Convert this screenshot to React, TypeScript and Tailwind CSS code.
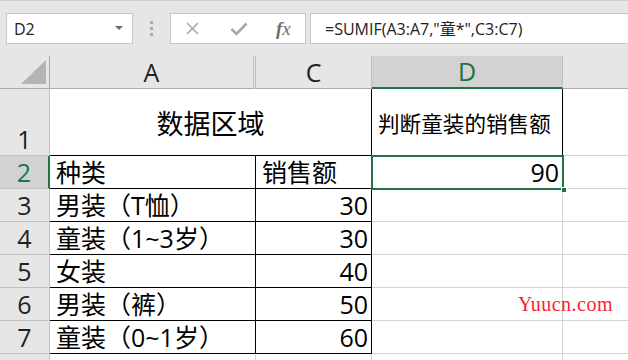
import React from "react";

function RowHead({ n, sel, tall }: { n: number; sel?: boolean; tall?: boolean }) {
  return (
    <div
      className={
        "w-[50px] shrink-0 flex justify-center border-b border-r border-[#bfbfbf] text-[25px] leading-none " +
        (tall ? "items-end pb-[3px] " : "items-center ") +
        (sel ? "bg-[#d2d2d2] text-[#217346] border-r-2 border-r-[#217346]" : "bg-[#e6e6e6] text-[#222]")
      }
    >
      {n}
    </div>
  );
}

function DataRow({ n, a, c }: { n: number; a: string; c: string }) {
  return (
    <div className="flex h-[33px]">
      <RowHead n={n} />
      <div className="w-[206px] shrink-0 border-r border-b border-black flex items-center pl-[6px] text-[25px] leading-none text-black whitespace-nowrap">
        {a}
      </div>
      <div className="w-[116px] shrink-0 border-r border-b border-black flex items-center justify-end pr-[3px] text-[25px] leading-none text-black">
        {c}
      </div>
      <div className="w-[191px] shrink-0 border-r border-b border-[#d4d4d4]" />
      <div className="flex-1 border-b border-[#d4d4d4]" />
    </div>
  );
}

export default function App() {
  return (
    <div
      className="w-[628px] h-[360px] bg-white overflow-hidden relative"
      style={{ fontFamily: '"Open Sans", "Noto Sans CJK SC", sans-serif' }}
    >
      {/* toolbar */}
      <div className="h-[57px] bg-[#e6e6e6] border-t border-[#d0d0d0] flex items-start pt-[12px]">
        <div className="ml-[6px] w-[127px] h-[31px] bg-white border border-[#c6c6c6] flex items-center pl-[7px] pr-[9px] text-[16px] text-[#222]">
          <span className="flex-1">D2</span>
          <svg width="8" height="5" viewBox="0 0 8 5">
            <path d="M0 0 L8 0 L4 4 Z" fill="#6b6b6b" />
          </svg>
        </div>
        <div className="w-[37px] h-[31px] flex flex-col items-center justify-center gap-[3px]">
          <div className="w-[3px] h-[3px] bg-[#acacac]" />
          <div className="w-[3px] h-[3px] bg-[#acacac]" />
          <div className="w-[3px] h-[3px] bg-[#acacac]" />
        </div>
        <div className="w-[136px] h-[31px] bg-white border border-[#c6c6c6] flex items-center pl-[14px]">
          <svg width="15" height="15" viewBox="0 0 15 15">
            <path d="M2 2 L13 13 M13 2 L2 13" stroke="#a8a8a8" strokeWidth="1.6" />
          </svg>
          <svg className="ml-[30px]" width="18" height="14" viewBox="0 0 18 14">
            <path d="M1.5 7 L6.5 12 L16.5 1.5" stroke="#a8a8a8" strokeWidth="2.6" fill="none" />
          </svg>
          <span
            className="ml-[28px] text-[19px] italic text-[#6e6e6e] leading-none"
            style={{ fontFamily: '"Liberation Serif", serif' }}
          >
            <span className="font-bold">f</span>x
          </span>
        </div>
        <div className="ml-[4px] flex-1 h-[31px] bg-white border border-r-0 border-[#c6c6c6] flex items-center pl-[14px] text-[16px] text-[#222] whitespace-nowrap">
          =SUMIF(A3:A7,"童*",C3:C7)
        </div>
      </div>

      {/* column header */}
      <div className="flex h-[33px] -mt-[1px]">
        <div className="w-[50px] shrink-0 bg-[#e6e6e6] border-r border-b border-[#ababab] relative">
          <svg className="absolute right-[3px] bottom-[4px]" width="25" height="24" viewBox="0 0 25 24">
            <path d="M25 0 L25 24 L0 24 Z" fill="#b4b4b4" />
          </svg>
        </div>
        <div className="w-[206px] shrink-0 bg-[#e6e6e6] border-r-[3px] border-double border-b border-b-solid border-[#bfbfbf] border-b-[#ababab] flex items-center justify-center text-[25px] text-[#222] leading-none">
          A
        </div>
        <div className="w-[116px] shrink-0 bg-[#e6e6e6] border-r border-b border-[#bfbfbf] border-b-[#ababab] flex items-center justify-center text-[25px] text-[#222] leading-none">
          C
        </div>
        <div className="w-[191px] shrink-0 bg-[#d2d2d2] border-r border-[#bfbfbf] border-b-2 border-b-[#217346] flex items-center justify-center text-[25px] text-[#217346] leading-none">
          D
        </div>
        <div className="flex-1 bg-[#e6e6e6] border-b border-[#ababab]" />
      </div>

      {/* row 1 */}
      <div className="flex h-[67px]">
        <RowHead n={1} tall />
        <div className="w-[322px] shrink-0 border-r border-b border-black flex items-center justify-center text-[27px] leading-none text-black pt-[3px]">
          数据区域
        </div>
        <div className="w-[191px] shrink-0 border-r border-b border-black flex items-center pl-[6px] text-[21.6px] leading-none text-black whitespace-nowrap pt-[3px]">
          判断童装的销售额
        </div>
        <div className="flex-1 border-b border-[#d4d4d4]" />
      </div>

      {/* row 2 */}
      <div className="flex h-[33px]">
        <RowHead n={2} sel />
        <div className="w-[206px] shrink-0 border-r border-b border-black flex items-center pl-[6px] text-[25px] leading-none text-black">
          种类
        </div>
        <div className="w-[116px] shrink-0 border-r border-b border-black flex items-center pl-[6px] text-[25px] leading-none text-black">
          销售额
        </div>
        <div className="w-[191px] shrink-0 relative border-b border-[#d4d4d4] flex items-center justify-end pr-[4px] text-[25px] leading-none text-black">
          90
          <div className="absolute -left-[1px] -top-[1px] -right-[1px] -bottom-[2px] border-2 border-[#217346] pointer-events-none" />
          <div className="absolute -right-[4px] -bottom-[5px] w-[6px] h-[6px] bg-[#217346] border border-white" />
        </div>
        <div className="flex-1 border-b border-l border-[#d4d4d4]" />
      </div>

      <DataRow n={3} a="男装（T恤）" c="30" />
      <DataRow n={4} a="童装（1~3岁）" c="30" />
      <DataRow n={5} a="女装" c="40" />
      <DataRow n={6} a="男装（裤）" c="50" />
      <DataRow n={7} a="童装（0~1岁）" c="60" />
      <div className="flex h-[10px]">
        <div className="w-[50px] shrink-0 bg-[#e6e6e6] border-r border-[#bfbfbf]" />
        <div className="w-[206px] shrink-0 border-r border-[#d4d4d4]" />
        <div className="w-[116px] shrink-0 border-r border-[#d4d4d4]" />
        <div className="w-[191px] shrink-0 border-r border-[#d4d4d4]" />
      </div>

      <div
        className="absolute left-[518px] top-[294px] text-[20px] text-[#ff1c2e] leading-none tracking-[0.5px]"
        style={{ fontFamily: '"Liberation Serif", serif' }}
      >
        Yuucn.com
      </div>
    </div>
  );
}
